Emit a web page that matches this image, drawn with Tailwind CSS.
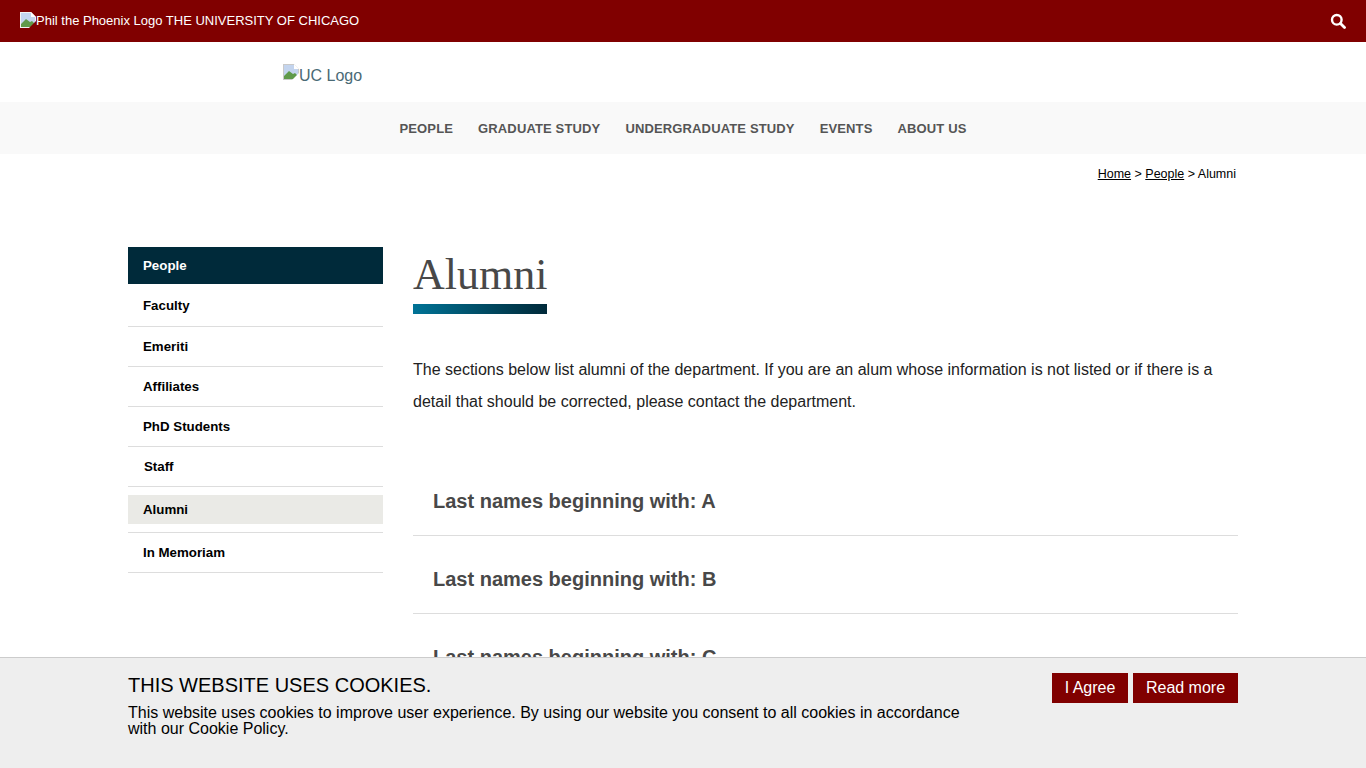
<!DOCTYPE html>
<html lang="en">
<head>
  <meta charset="UTF-8" />
  <meta name="viewport" content="width=device-width, initial-scale=1.0" />
  <title>Alumni</title>
  <script src="https://cdn.jsdelivr.net/npm/@tailwindcss/browser@4"></script>
</head>
<body class="h-screen overflow-hidden bg-white font-['Liberation_Sans',Arial,sans-serif] text-[#222]">
  <header class="h-[42px] bg-[#800000] flex items-center justify-between pl-5 pr-[20px] text-white text-[13px]">
    <div class="flex items-center">
      <svg class="w-4 h-4 -mt-[3px]" viewBox="0 0 16 16"><path d="M0 0h11l5 5v11H0z" fill="#f2f2f2"/><path d="M1 1h10v4h4v10H1z" fill="#c3d4ee"/><path d="M1 15v-3l5-5 4 3 2-1 3 3v3z" fill="#5f9a4a"/><path d="M11 0l5 5h-5z" fill="#fff"/><path d="M9 16l7-7v7z" fill="#800000"/></svg>
      <span>Phil the Phoenix Logo THE UNIVERSITY OF CHICAGO</span>
    </div>
    <svg class="w-4 h-4" viewBox="0 0 16 16" fill="none" stroke="white"><circle cx="6.8" cy="6.8" r="4.8" stroke-width="2.4"/><path d="M10.5 10.5l4 4" stroke-width="2.8" stroke-linecap="round"/></svg>
  </header>

  <div class="h-[60px] pl-[283px] pt-[22px] flex items-start text-[#4a6a75] text-base">
    <svg class="w-4 h-4" viewBox="0 0 16 16"><path d="M0 0h11l5 5v11H0z" fill="#c9c9c9"/><path d="M1 1h10v4h4v10H1z" fill="#c3d4ee"/><path d="M1 15v-3l5-5 4 3 2-1 3 3v3z" fill="#5f9a4a"/><path d="M11 0l5 5h-5z" fill="#fff"/><path d="M9 16l7-7v7z" fill="#fff"/></svg>
    <span>UC Logo</span>
  </div>

  <nav class="h-[52px] pt-[1px] bg-[#f9f9f9] flex items-center justify-center gap-[25px] text-[13px] font-bold text-[#555] tracking-[0.14px]">
    <a href="#">PEOPLE</a>
    <a href="#">GRADUATE STUDY</a>
    <a href="#">UNDERGRADUATE STUDY</a>
    <a href="#">EVENTS</a>
    <a href="#">ABOUT US</a>
  </nav>

  <div class="h-[93px] pt-[12px] pr-[130px] text-right text-[12.5px] leading-4 text-black">
    <a href="#" class="underline">Home</a> &gt; <a href="#" class="underline">People</a> &gt; Alumni
  </div>

  <main class="flex gap-[30px] pl-[128px] pr-[128px]">
    <aside class="w-[255px] shrink-0 text-[13.3px] font-bold text-black">
      <div class="h-[37px] bg-[#002a3a] text-white flex items-center px-[15px]">People</div>
      <a href="#" class="h-[43px] pt-[2px] border-b border-[#ddd] flex items-center px-[15px]">Faculty</a>
      <a href="#" class="h-[40px] border-b border-[#ddd] flex items-center px-[15px]">Emeriti</a>
      <a href="#" class="h-[40px] border-b border-[#ddd] flex items-center px-[15px]">Affiliates</a>
      <a href="#" class="h-[40px] border-b border-[#ddd] flex items-center px-[15px]">PhD Students</a>
      <a href="#" class="h-[40px] border-b border-[#ddd] flex items-center px-[16px]">Staff</a>
      <div class="h-[46px] border-b border-[#ddd] pt-2">
        <a href="#" class="h-[29px] pt-[1px] bg-[#eaeae6] flex items-center px-[15px]">Alumni</a>
      </div>
      <a href="#" class="h-[40px] border-b border-[#ddd] flex items-center px-[15px]">In Memoriam</a>
    </aside>

    <section class="flex-1">
      <h1 class="font-['Liberation_Serif',serif] text-[44px] leading-[52px] text-[#484848] mt-[2px]">Alumni</h1>
      <div class="w-[134px] h-[10px] mt-[3px] bg-gradient-to-r from-[#007396] to-[#002a3a]"></div>
      <p class="mt-[40px] text-base leading-8">The sections below list alumni of the department. If you are an alum whose information is not listed or if there is a detail that should be corrected, please contact the department.</p>
      <div class="mt-[40px] text-xl font-bold text-[#484848]">
        <div class="h-[78px] pt-[8px] border-b border-[#ddd] flex items-center pl-5">Last names beginning with: A</div>
        <div class="h-[78px] pt-[8px] border-b border-[#ddd] flex items-center pl-5">Last names beginning with: B</div>
        <div class="h-[78px] pt-[8px] border-b border-[#ddd] flex items-center pl-5">Last names beginning with: C</div>
      </div>
    </section>
  </main>

  <div class="fixed bottom-0 inset-x-0 h-[111px] bg-[#eee] border-t border-[#ccc] pl-[128px] pr-[128px] pt-[15px] flex justify-between text-black">
    <div class="w-[840px]">
      <h2 class="text-xl leading-6">THIS WEBSITE USES COOKIES.</h2>
      <p class="mt-[8px] text-base leading-4">This website uses cookies to improve user experience. By using our website you consent to all cookies in accordance with our Cookie Policy.</p>
    </div>
    <div class="flex gap-[5px] items-start text-base text-white">
      <button class="h-[30px] w-[76px] bg-[#800000]">I Agree</button>
      <button class="h-[30px] w-[105px] bg-[#800000]">Read more</button>
    </div>
  </div>
</body>
</html>
